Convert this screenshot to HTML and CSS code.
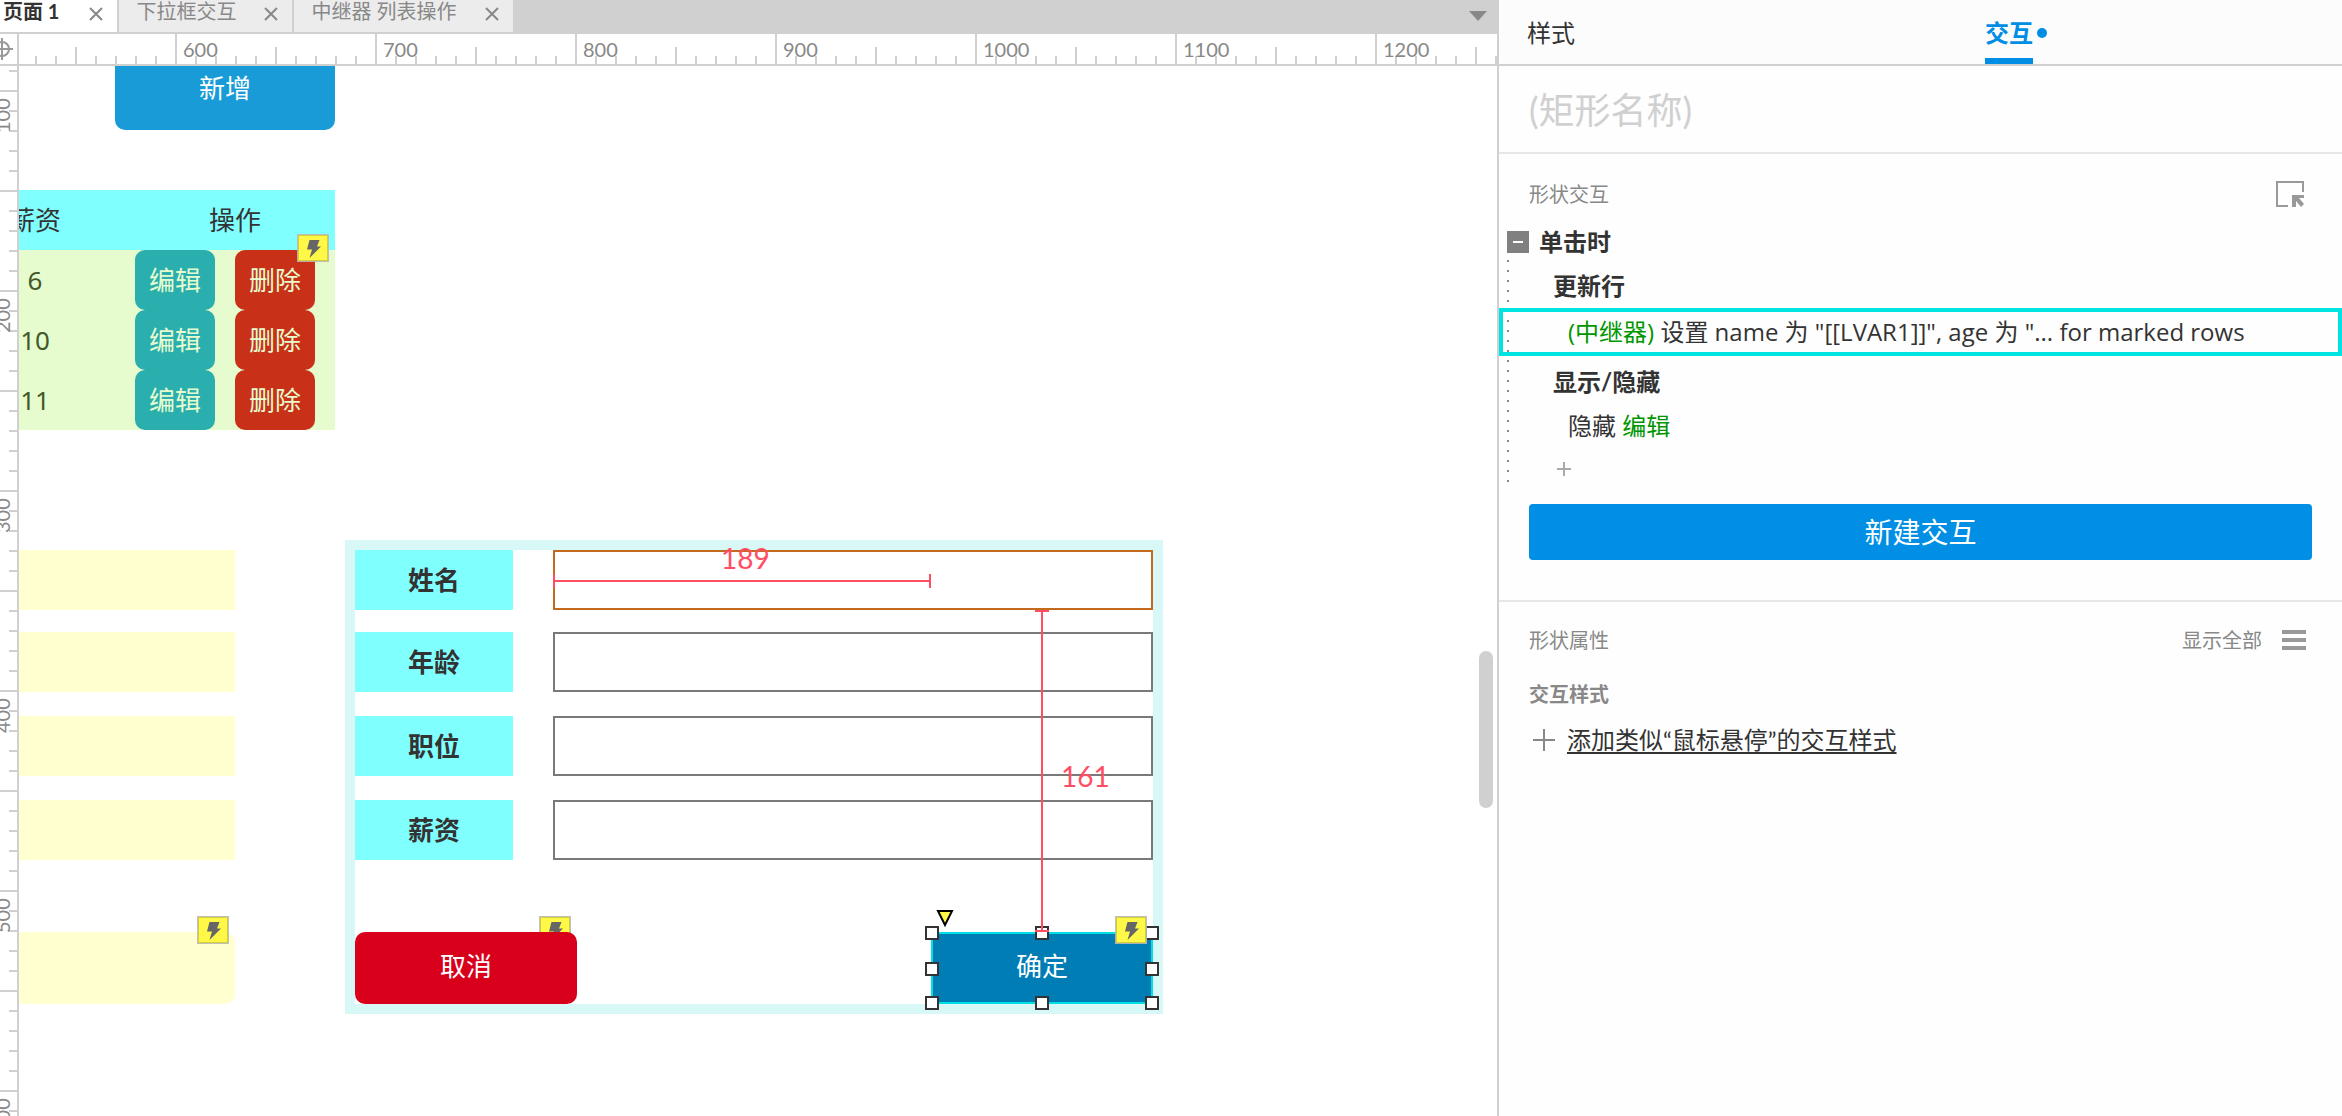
FILE: index.html
```html
<!DOCTYPE html>
<html lang="zh-CN">
<head>
<meta charset="utf-8">
<title>页面 1</title>
<link rel="stylesheet" href="styles.css">
</head>
<body>
<svg class="sprite" aria-hidden="true">
  <symbol id="bolt" viewBox="0 0 32 28">
    <rect width="32" height="28" fill="#b9bab6" fill-opacity=".9"/>
    <rect x="1" y="1" width="30" height="26" fill="#d3cd3c"/>
    <rect x="2" y="2" width="28" height="24" fill="#fff846"/>
    <path d="M12.500 6H22.500L20 12.500H24L12.500 24L15 15.500H10Z" fill="#666"/>
  </symbol>
  <symbol id="close" viewBox="0 0 14 14">
    <path d="M1 1L13 13M13 1L1 13" fill="none" stroke="#888" stroke-width="2"/>
  </symbol>
</svg>

<div class="app">
  <main class="workspace">
    <nav class="tabs">
      <div class="tab tab-active"><a href="#page1">页面 1</a><button class="tab-close" aria-label="关闭"><svg><use href="#close"/></svg></button></div>
      <div class="tab"><a href="#page2">下拉框交互</a><button class="tab-close" aria-label="关闭"><svg><use href="#close"/></svg></button></div>
      <div class="tab"><a href="#page3">中继器 列表操作</a><button class="tab-close" aria-label="关闭"><svg><use href="#close"/></svg></button></div>
      <button class="tab-menu" aria-label="页面列表"><svg viewBox="0 0 18 10"><path d="M0 0H18L9 10Z" fill="#888"/></svg></button>
    </nav>

    <div class="ruler-origin">
      <svg viewBox="0 0 17 30"><path d="M2 4V26M0 15H13" stroke="#999" stroke-width="2"/><circle cx="2" cy="15" r="7" fill="none" stroke="#999" stroke-width="2"/></svg>
    </div>
    <div class="ruler-x">
      <span>600</span><span>700</span><span>800</span><span>900</span><span>1000</span><span>1100</span><span>1200</span>
    </div>
    <div class="ruler-y">
      <span>100</span><span>200</span><span>300</span><span>400</span><span>500</span><span>600</span>
    </div>

    <section class="canvas">
      <button class="shape add-button">新增</button>

      <div class="repeater">
        <table>
          <thead><tr><th>薪资</th><th>操作</th></tr></thead>
          <tbody>
            <tr><td>6</td><td><div class="actions"><button class="edit">编辑</button><button class="delete">删除</button></div></td></tr>
            <tr><td>10</td><td><div class="actions"><button class="edit">编辑</button><button class="delete">删除</button></div></td></tr>
            <tr><td>11</td><td><div class="actions"><button class="edit">编辑</button><button class="delete">删除</button></div></td></tr>
          </tbody>
        </table>
        <svg class="badge table-badge"><use href="#bolt"/></svg>
      </div>

      <div class="hidden-form">
        <div class="mask"></div><div class="mask"></div><div class="mask"></div><div class="mask"></div>
        <div class="mask mask-button"><svg class="badge"><use href="#bolt"/></svg></div>
      </div>

      <form class="edit-form">
        <label for="f-name">姓名</label><input id="f-name" class="hovered" type="text">
        <label for="f-age">年龄</label><input id="f-age" type="text">
        <label for="f-job">职位</label><input id="f-job" type="text">
        <label for="f-pay">薪资</label><input id="f-pay" type="text">
        <div class="form-buttons">
          <div class="holder"><svg class="badge"><use href="#bolt"/></svg><button type="button" class="shape cancel">取消</button></div>
          <div class="holder">
            <button type="button" class="shape confirm">确定</button>
            <i class="handle n w"></i><i class="handle n c"></i><i class="handle n e"></i>
            <i class="handle m w"></i><i class="handle m e"></i>
            <i class="handle s w"></i><i class="handle s c"></i><i class="handle s e"></i>
            <svg class="badge"><use href="#bolt"/></svg>
            <svg class="radius-grip" viewBox="0 0 18 18"><path d="M2 1H16L9 15Z" fill="#fff846" stroke="#000" stroke-width="2"/></svg>
          </div>
        </div>
      </form>

      <div class="measure-x"></div><span class="measure-label label-x">189</span>
      <div class="measure-y"></div><span class="measure-label label-y">161</span>
      <div class="scroll-thumb"></div>
    </section>
  </main>

  <aside class="panel">
    <nav class="panel-tabs">
      <a href="#style">样式</a>
      <a href="#interaction" class="current">交互</a>
    </nav>
    <div class="name-row"><input type="text" aria-label="矩形名称" placeholder="(矩形名称)"></div>

    <section class="interactions">
      <header class="section-head">
        <h2>形状交互</h2>
        <button class="pick" aria-label="选择目标"><svg class="target-icon" viewBox="0 0 28 26"><path d="M12 25H1V1H27V11" fill="none" stroke="#999" stroke-width="2"/><path d="M16 14H28V17H23L28 23L25 26L20 20V26H16Z" fill="#999"/></svg></button>
      </header>
      <div class="event">
        <h3><button class="toggle" aria-label="收起"></button>单击时</h3>
        <div class="tree">
          <h4>更新行</h4>
          <p class="action selected"><span class="target">(中继器)</span> 设置 name 为 "[[LVAR1]]", age 为 "... for marked rows</p>
          <h4>显示/隐藏</h4>
          <p class="action">隐藏 <span class="target">编辑</span></p>
          <button class="add-action" aria-label="添加动作"><svg viewBox="0 0 14 14"><path d="M7 0V14M0 7H14" stroke="#aaa" stroke-width="2"/></svg></button>
        </div>
      </div>
      <button class="new-interaction">新建交互</button>
    </section>

    <section class="properties">
      <header class="section-head">
        <h2>形状属性</h2>
        <a href="#all">显示全部</a>
        <button aria-label="菜单"><svg class="menu-icon" viewBox="0 0 24 20"><path d="M0 2H24M0 10H24M0 18H24" stroke="#999" stroke-width="4"/></svg></button>
      </header>
      <h5>交互样式</h5>
      <div class="add-style">
        <svg viewBox="0 0 22 22"><path d="M11 0V22M0 11H22" stroke="#888" stroke-width="2"/></svg>
        <a href="#add-style">添加类似“鼠标悬停”的交互样式</a>
      </div>
    </section>
  </aside>
</div>
</body>
</html>
```

FILE: styles.css
```css
* { box-sizing: border-box; }

body {
  margin: 0;
  background: #fff;
  color: #333;
  font-family: Lato, "Noto Sans CJK SC", sans-serif;
  font-size: 24px;
  line-height: 36px;
}

button, input { font: inherit; color: inherit; border: 0; padding: 0; background: none; }
h2, h3, h4, h5, p { margin: 0; font-size: inherit; }
a { color: inherit; text-decoration: none; }
svg { display: block; }
.sprite { position: absolute; width: 0; height: 0; }

.app {
  display: grid;
  grid-template-columns: minmax(0, 1fr) 845px;
  min-height: 100vh;
}

/* Workspace: tabs, rulers, canvas */
.workspace {
  display: grid;
  grid-template-columns: 19px minmax(0, 1fr);
  grid-template-rows: 34px 32px minmax(0, 1fr);
  height: 100vh;
  overflow: hidden;
}

.tabs {
  grid-column: 1 / -1;
  display: flex;
  background: #d0d0d0;
  padding-bottom: 2px;
  font-size: 20px;
}
.tab {
  display: flex;
  align-items: center;
  gap: 28px;
  padding: 0 14px 9px 17px;
  background: #ececec;
  border-right: 2px solid #d0d0d0;
  color: #888;
  line-height: 23px;
}
.tab-active { gap: 30px; background: #fff; color: #333; font-weight: 700; padding-left: 3px; }
.tab:nth-child(3) { border-right: 0; }
.tab-close { margin-top: 5px; }
.tab-close svg { width: 14px; height: 14px; }
.tab-menu { margin: 0 10px 0 auto; }
.tab-menu svg { width: 18px; height: 10px; }

.ruler-origin { border-right: 2px solid #d0d0d0; border-bottom: 2px solid #d0d0d0; }
.ruler-origin svg { width: 17px; height: 30px; }

.ruler-x, .ruler-y { display: flex; overflow: hidden; color: #888; font-size: 20px; line-height: 30px; }
.ruler-x {
  padding-left: 156px;
  border-bottom: 2px solid #d0d0d0;
  background:
    linear-gradient(90deg, #d0d0d0 2px, transparent 2px) 156px 0 / 200px 30px repeat-x,
    linear-gradient(90deg, #d0d0d0 2px, transparent 2px) 56px 13px / 100px 17px repeat-x,
    linear-gradient(90deg, #d0d0d0 2px, transparent 2px) 16px 22px / 20px 8px repeat-x;
}
.ruler-x span { flex: 0 0 200px; padding-left: 8px; }
.ruler-y {
  flex-direction: column;
  padding-top: 24px;
  border-right: 2px solid #d0d0d0;
  background:
    linear-gradient(#d0d0d0 2px, transparent 2px) 0 24px / 17px 100px repeat-y,
    linear-gradient(#d0d0d0 2px, transparent 2px) 9px 4px / 8px 20px repeat-y;
}
.ruler-y span {
  flex: 0 0 200px;
  width: 30px;
  margin-left: -13px;
  padding-bottom: 8px;
  writing-mode: vertical-rl;
  transform: rotate(180deg);
  text-align: right;
}

.canvas { position: relative; overflow: hidden; font-size: 26px; line-height: 36px; }
.canvas > * { position: absolute; }

.shape { width: 222px; height: 72px; padding-bottom: 4px; border-radius: 10px; color: #fff; }
.badge { position: absolute; right: 6px; top: -16px; width: 32px; height: 28px; }

.add-button { left: 96px; top: -16px; width: 220px; height: 80px; background: #189bd6; }

.repeater { left: -84px; top: 124px; width: 400px; font-family: "Noto Sans", "Noto Sans CJK SC", sans-serif; }
.repeater table { width: 100%; border-collapse: collapse; table-layout: fixed; text-align: center; }
.repeater th, .repeater td { height: 60px; padding: 0; }
.repeater th { background: #80ffff; font-weight: 400; }
.repeater td { background: #e6fccf; color: #43592b; }
.actions { display: flex; gap: 20px; }
.actions button { width: 80px; height: 60px; border-radius: 10px; color: #e6fccf; }
.edit { background: #2baeae; }
.delete { background: #c83018; }
.table-badge { top: 44px; }

.hidden-form {
  left: -6px;
  top: 484px;
  width: 222px;
  display: grid;
  grid-template-rows: 82px 84px 84px 132px 72px;
}
.mask { height: 60px; background: #ffffd0; }
.mask-button { position: relative; height: 72px; border-radius: 10px; }

.edit-form {
  left: 326px;
  top: 474px;
  width: 818px;
  display: grid;
  grid-template-columns: 158px 600px;
  grid-template-rows: 82px 84px 84px 132px 72px;
  column-gap: 40px;
  border: 10px solid #d7f8f7;
}
.edit-form label { height: 60px; line-height: 60px; background: #80ffff; font-weight: 700; text-align: center; }
.edit-form input { height: 60px; border: 2px solid #797979; background: #fff; padding: 0 12px; }
.edit-form .hovered { border-color: #c46a1d; }
.form-buttons { grid-column: 1 / -1; display: flex; justify-content: space-between; }
.holder { position: relative; height: 72px; }
.cancel { position: relative; display: block; background: #d9001b; }
.confirm { display: block; background: #007db5; border: 2px solid #00dfe3; border-radius: 0; }

.handle { position: absolute; width: 14px; height: 14px; border: 2px solid #333; background: #fff; }
.handle.n { top: -6px; }
.handle.m { top: 30px; }
.handle.s { bottom: -6px; }
.handle.w { left: -6px; }
.handle.c { left: 104px; }
.handle.e { right: -6px; }
.radius-grip { position: absolute; left: 5px; top: -22px; width: 18px; height: 18px; }

/* Distance guides */
.measure-x { left: 534px; top: 508px; width: 378px; height: 14px; border: solid #ff4d64; border-width: 0 2px; background: linear-gradient(#ff4d64, #ff4d64) 0 6px / 100% 2px no-repeat; }
.measure-y { left: 1016px; top: 544px; width: 14px; height: 322px; border: solid #ff4d64; border-width: 2px 0; background: linear-gradient(#ff4d64, #ff4d64) 6px 0 / 2px 100% no-repeat; }
.measure-label { color: #ff4d64; font-size: 28px; }
.label-x { left: 702px; top: 474px; }
.label-y { left: 1042px; top: 692px; }
.scroll-thumb { right: 4px; top: 585px; width: 14px; height: 157px; border-radius: 7px; background: #d0d0d0; }

/* Inspector panel */
.panel { border-left: 2px solid #d0d0d0; background: #fefefe; }
.panel-tabs {
  display: flex;
  gap: 410px;
  height: 66px;
  padding-left: 28px;
  background: #fcfcfc;
  border-bottom: 2px solid #d0d0d0;
}
.panel-tabs a { line-height: 66px; height: 64px; }
.panel-tabs .current { position: relative; color: #008de4; font-weight: 700; box-shadow: inset 0 -6px #008de4; }
.current::after { content: ""; position: absolute; left: 52px; top: 28px; width: 10px; height: 10px; border-radius: 50%; background: #008de4; }

.name-row { height: 88px; padding: 12px 30px; border-bottom: 2px solid #e6e6e6; }
.name-row input { width: 100%; height: 64px; font-size: 36px; }
.name-row input::placeholder { color: #d0d0d0; opacity: 1; }

.section-head { display: flex; align-items: center; padding: 0 36px 0 30px; height: 36px; color: #888; font-size: 20px; }
.section-head h2 { font-weight: 400; margin-right: auto; }
.section-head a { margin-right: 20px; }
.pick { margin-right: 2px; }
.target-icon { width: 28px; height: 26px; }
.menu-icon { width: 24px; height: 20px; }

.interactions { padding: 22px 0 40px; border-bottom: 2px solid #e6e6e6; }
.event { padding-top: 12px; }
.event h3 { display: flex; align-items: center; gap: 10px; height: 36px; padding-left: 8px; }
.toggle { width: 22px; height: 22px; background: linear-gradient(#fff, #fff) center / 10px 2px no-repeat #808080; }
.tree { margin-bottom: 20px; background: linear-gradient(#888 2px, transparent 2px) 8px 0 / 2px 10px repeat-y; }
.event h4 { height: 48px; padding: 8px 0 4px 54px; }
.action { height: 42px; padding: 4px 0 0 69px; font-family: "Open Sans", "Noto Sans CJK SC", sans-serif; white-space: nowrap; overflow: hidden; }
.action.selected { height: 48px; padding: 0 0 0 65px; line-height: 40px; border: 4px solid #00e3e0; }
.target { color: #009600; }
.add-action { display: block; padding: 16px 0 8px 58px; }
.add-action svg { width: 14px; height: 14px; }
.new-interaction { display: block; width: calc(100% - 60px); height: 56px; margin: 0 30px; border-radius: 4px; background: #008fe5; color: #fff; font-size: 28px; }

.properties { padding-top: 20px; }
.properties h5 { margin-top: 18px; padding-left: 30px; color: #888; font-size: 20px; }
.add-style { display: flex; align-items: center; gap: 12px; margin-top: 10px; padding-left: 34px; }
.add-style svg { width: 22px; height: 22px; }
.add-style a { text-decoration: underline; text-decoration-thickness: 2px; text-underline-offset: 3px; }
```
